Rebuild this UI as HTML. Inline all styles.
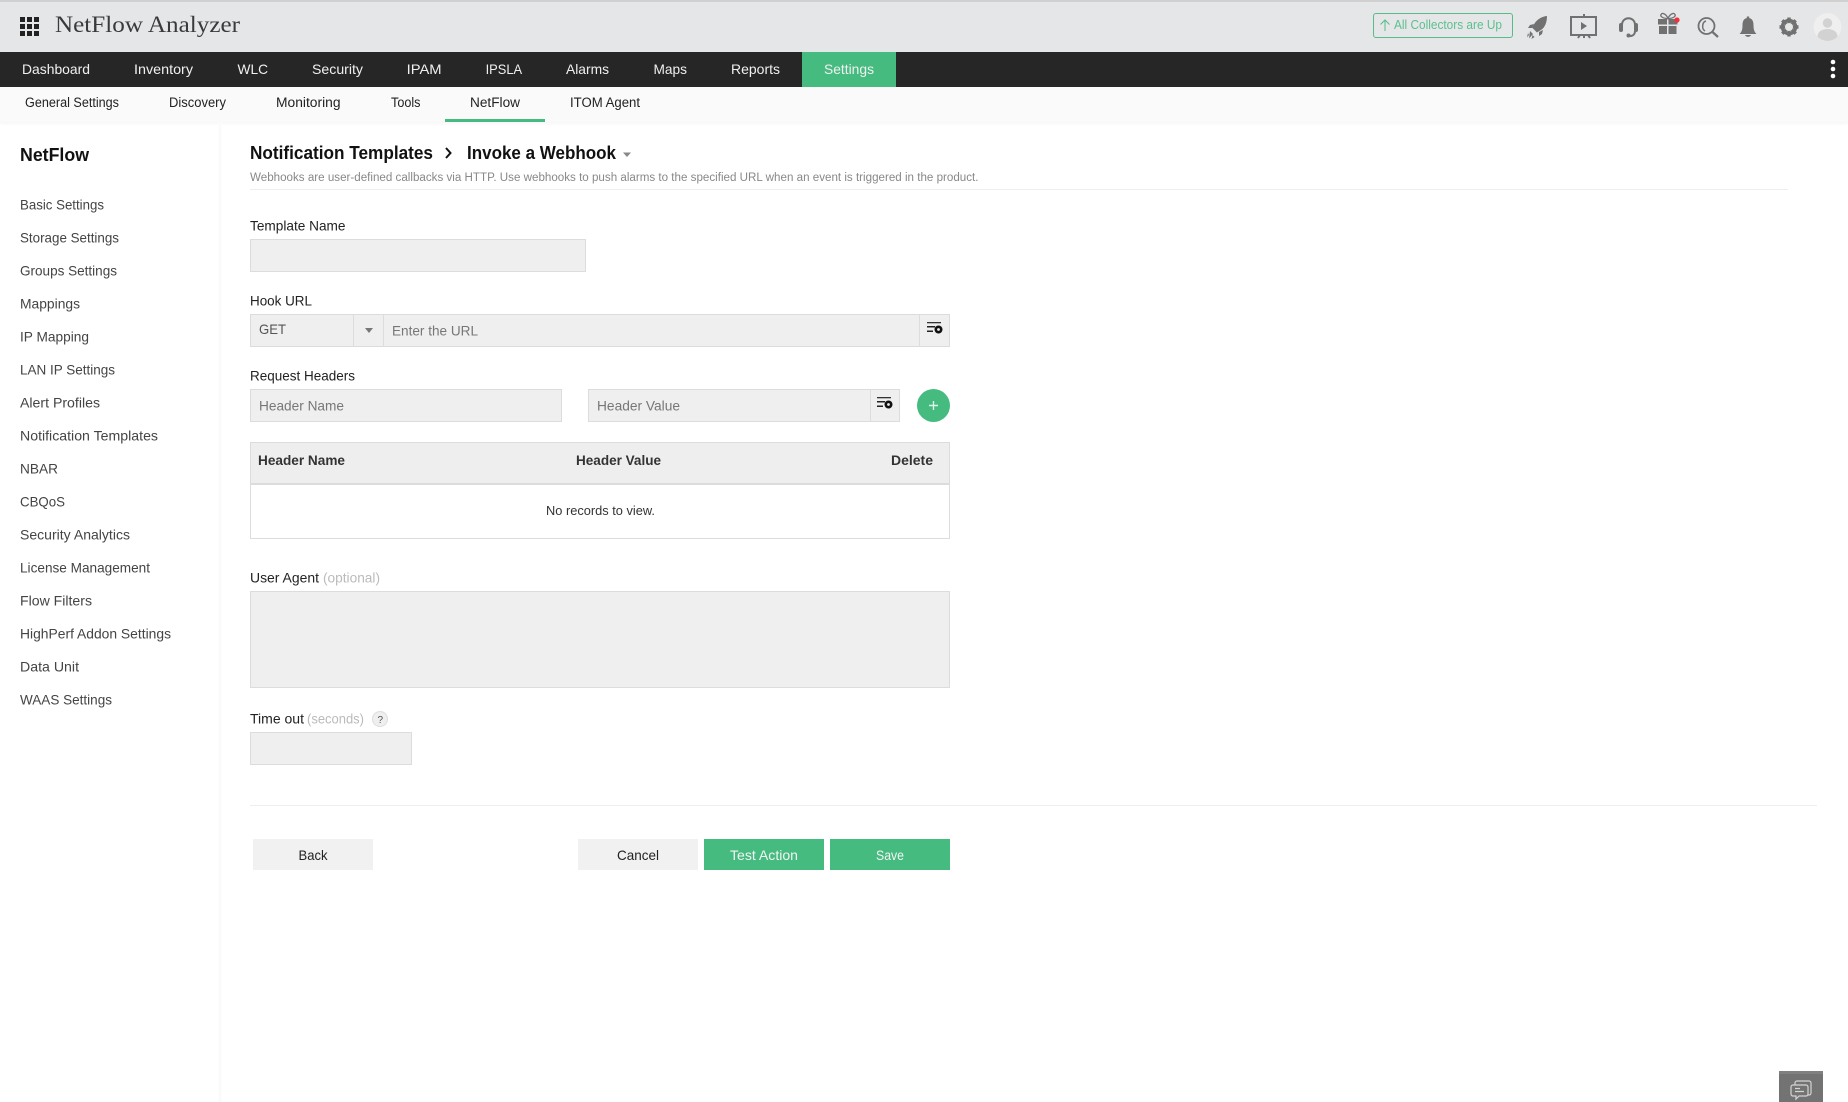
<!DOCTYPE html>
<html lang="en"><head><meta charset="utf-8"><title>NetFlow Analyzer</title>
<style>
html,body{margin:0;padding:0;width:1848px;height:1102px;overflow:hidden;background:#fff}
.b{position:absolute;box-sizing:border-box}
.in{background:#efefef;border:1px solid #dcdcdc}
svg{position:absolute;left:0;top:0}
text{font-family:"Liberation Sans",sans-serif;font-size:14px;fill:#333}
.nav{fill:#f0f0f0}.sub{fill:#222;font-size:13.5px}.side{fill:#444}.lab{fill:#222}.ph{fill:#777}.th{fill:#333;font-weight:bold;font-size:13.5px}.gr{fill:#bbb}.btn{fill:#222}.wbtn{fill:#f4f4f4}
</style></head><body>
<div class="b" style="left:0;top:0;width:1848px;height:52px;background:#e5e6e8;border-top:2px solid #d0d0d0"></div>
<div class="b" style="left:0;top:52px;width:1848px;height:35px;background:#262626"></div>
<div class="b" style="left:802px;top:52px;width:94px;height:35px;background:#45bb80"></div>
<div class="b" style="left:0;top:87px;width:1848px;height:35px;background:#fafafa;box-shadow:0 2px 3px rgba(0,0,0,.04)"></div>
<div class="b" style="left:445px;top:119px;width:100px;height:3px;background:#45bb80"></div>
<div class="b" style="left:218px;top:122px;width:4px;height:980px;background:linear-gradient(90deg,#fff,#f8f8f8 50%,#fff)"></div>
<div class="b" style="left:1373px;top:13px;width:140px;height:25px;border:1px solid #56bd88;border-radius:3px"></div>
<div class="b" style="left:250px;top:189px;width:1538px;height:1px;background:#eee"></div>
<div class="b in" style="left:250px;top:239px;width:336px;height:33px"></div>
<div class="b in" style="left:250px;top:314px;width:700px;height:33px"></div>
<div class="b" style="left:353px;top:315px;width:1px;height:31px;background:#dcdcdc"></div>
<div class="b" style="left:383px;top:315px;width:1px;height:31px;background:#dcdcdc"></div>
<div class="b" style="left:919px;top:315px;width:1px;height:31px;background:#dcdcdc"></div>
<div class="b in" style="left:250px;top:389px;width:312px;height:33px"></div>
<div class="b in" style="left:588px;top:389px;width:312px;height:33px"></div>
<div class="b" style="left:870px;top:390px;width:1px;height:31px;background:#dcdcdc"></div>
<div class="b" style="left:917px;top:389px;width:33px;height:33px;border-radius:50%;background:#45bb80"></div>
<div class="b" style="left:250px;top:442px;width:700px;height:97px;border:1px solid #dcdcdc"></div>
<div class="b" style="left:250px;top:442px;width:700px;height:43px;background:#eee;border:1px solid #dcdcdc;border-bottom-width:2px"></div>
<div class="b in" style="left:250px;top:591px;width:700px;height:97px"></div>
<div class="b in" style="left:250px;top:732px;width:162px;height:33px"></div>
<div class="b" style="left:250px;top:805px;width:1567px;height:1px;background:#eee"></div>
<div class="b" style="left:253px;top:839px;width:120px;height:31px;background:#f1f1f1"></div>
<div class="b" style="left:578px;top:839px;width:120px;height:31px;background:#f1f1f1"></div>
<div class="b" style="left:704px;top:839px;width:120px;height:31px;background:#45bb80"></div>
<div class="b" style="left:830px;top:839px;width:120px;height:31px;background:#45bb80"></div>
<div class="b" style="left:1779px;top:1071px;width:44px;height:31px;background:#737373;border-top:3px solid #808080"></div>

<svg width="1848" height="1102" viewBox="0 0 1848 1102">
<!-- grid icon -->
<g fill="#222">
<rect x="20" y="17" width="5" height="5"/><rect x="27" y="17" width="5" height="5"/><rect x="34" y="17" width="5" height="5"/>
<rect x="20" y="24" width="5" height="5"/><rect x="27" y="24" width="5" height="5"/><rect x="34" y="24" width="5" height="5"/>
<rect x="20" y="31" width="5" height="5"/><rect x="27" y="31" width="5" height="5"/><rect x="34" y="31" width="5" height="5"/>
</g>
<text x="55" y="32" textLength="185" lengthAdjust="spacingAndGlyphs" style="font-family:'Liberation Serif',serif;font-size:23px;fill:#3a3a3a">NetFlow Analyzer</text>

<!-- badge -->
<path d="M1385 31V20M1380.500 24.500l4.500-4.500 4.500 4.500" fill="none" stroke="#56bd88" stroke-width="1"/>
<text x="1394" y="29" textLength="108" lengthAdjust="spacingAndGlyphs" style="font-size:12.5px;fill:#5cc08e">All Collectors are Up</text>

<!-- rocket -->
<g fill="#717171">
<path d="M1547 16c-5.500.5-10 3.500-12.500 7.500l-2.500 4 5 5 4-2.500c4-2.500 6-8 6-14z"/>
<path d="M1534 24l-4 1-2 3 4 0zM1543 30l-1 4-3 2 0-4z"/>
<path d="M1530 31l3 3-4 4.500zM1532.500 35l2 2-3 2zM1528 33l1 2-2 2.500z"/>
</g>
<!-- presentation -->
<g fill="none" stroke="#717171" stroke-width="2">
<rect x="1571" y="17" width="25" height="18"/>
<path d="M1584 14v3M1584 35v3M1578 38l2-3M1590 38l-2-3"/>
</g>
<path d="M1581 22l6 4-6 4z" fill="#717171"/>
<!-- headset -->
<g fill="none" stroke="#717171" stroke-width="2">
<path d="M1622 25c0-9 13-9 13 0M1635 31c0 3-2 5-5 5"/>
</g>
<g fill="#717171"><rect x="1619" y="23" width="4" height="9" rx="2"/><rect x="1634" y="23" width="4" height="9" rx="2"/><circle cx="1628.500" cy="35.500" r="2"/></g>
<!-- gift -->
<g fill="#717171">
<rect x="1658" y="19" width="9" height="5.500"/><rect x="1668.500" y="19" width="9" height="5.500"/>
<rect x="1659" y="26" width="8" height="8"/><rect x="1668.500" y="26" width="8" height="8"/>
</g>
<path d="M1668 18.500c-2-5-6-6-7-4s2 4 7 4c5 0 8-2 7-4s-5-1-7 4z" fill="none" stroke="#717171" stroke-width="1.300"/>
<circle cx="1677" cy="20" r="2.600" fill="#f2303c"/>
<!-- search -->
<circle cx="1706.500" cy="26" r="8" fill="none" stroke="#717171" stroke-width="1.800"/>
<path d="M1712.500 32l5.500 5" stroke="#717171" stroke-width="2.200"/>
<path d="M1706 21c-4 1-4.500 8-1 10" fill="none" stroke="#717171" stroke-width="1.500"/>
<!-- bell -->
<path d="M1748 18c4 0 5.500 3 5.500 7 0 5 1 7 3 9h-17c2-2 3-4 3-9 0-4 1.500-7 5.500-7z" fill="#717171"/>
<rect x="1746.800" y="16.500" width="2.400" height="3" fill="#717171"/>
<path d="M1745 35h6c-1 2.500-5 2.500-6 0z" fill="#717171"/>
<!-- gear -->
<g stroke="#717171" stroke-width="3.400"><path d="M1789 17.500v19M1779.500 27h19M1782.300 20.300l13.400 13.400M1795.700 20.300l-13.400 13.400"/></g>
<circle cx="1789" cy="27" r="6.800" fill="none" stroke="#717171" stroke-width="3"/>
<circle cx="1789" cy="27" r="4" fill="#e5e6e8"/>
<!-- avatar -->
<clipPath id="av"><circle cx="1827.500" cy="27" r="14"/></clipPath>
<circle cx="1827.500" cy="27" r="14" fill="#efefef"/>
<g clip-path="url(#av)" fill="#d2d2d2">
<circle cx="1827.500" cy="23" r="4.700"/>
<ellipse cx="1827.500" cy="36" rx="10" ry="7"/>
</g>
<!-- kebab -->
<g fill="#fff"><circle cx="1833" cy="62" r="2.300"/><circle cx="1833" cy="69" r="2.300"/><circle cx="1833" cy="76" r="2.300"/></g>

<!-- nav -->
<g>
<text class="nav" x="22" y="74" textLength="68" lengthAdjust="spacingAndGlyphs">Dashboard</text>
<text class="nav" x="134" y="74" textLength="59" lengthAdjust="spacingAndGlyphs">Inventory</text>
<text class="nav" x="237.500" y="74" textLength="30.500" lengthAdjust="spacingAndGlyphs">WLC</text>
<text class="nav" x="312" y="74" textLength="51" lengthAdjust="spacingAndGlyphs">Security</text>
<text class="nav" x="406.600" y="74" textLength="35" lengthAdjust="spacingAndGlyphs">IPAM</text>
<text class="nav" x="485.600" y="74" textLength="36.500" lengthAdjust="spacingAndGlyphs">IPSLA</text>
<text class="nav" x="566" y="74" textLength="43" lengthAdjust="spacingAndGlyphs">Alarms</text>
<text class="nav" x="653.500" y="74" textLength="33.500" lengthAdjust="spacingAndGlyphs">Maps</text>
<text class="nav" x="731" y="74" textLength="49" lengthAdjust="spacingAndGlyphs">Reports</text>
<text class="nav" x="824" y="74" textLength="50" lengthAdjust="spacingAndGlyphs">Settings</text>
</g>
<!-- subnav -->
<text class="sub" x="25" y="107" textLength="94" lengthAdjust="spacingAndGlyphs">General Settings</text>
<text class="sub" x="169" y="107" textLength="57" lengthAdjust="spacingAndGlyphs">Discovery</text>
<text class="sub" x="276" y="107" textLength="64.500" lengthAdjust="spacingAndGlyphs">Monitoring</text>
<text class="sub" x="391" y="107" textLength="29.500" lengthAdjust="spacingAndGlyphs">Tools</text>
<text class="sub" x="470" y="107" textLength="50" lengthAdjust="spacingAndGlyphs">NetFlow</text>
<text class="sub" x="570" y="107" textLength="70" lengthAdjust="spacingAndGlyphs">ITOM Agent</text>

<!-- sidebar -->
<text x="20" y="161" textLength="69" lengthAdjust="spacingAndGlyphs" style="font-size:18px;font-weight:bold;fill:#111">NetFlow</text>
<text class="side" x="20" y="209.500" textLength="84" lengthAdjust="spacingAndGlyphs">Basic Settings</text>
<text class="side" x="20" y="242.500" textLength="99" lengthAdjust="spacingAndGlyphs">Storage Settings</text>
<text class="side" x="20" y="275.500" textLength="97" lengthAdjust="spacingAndGlyphs">Groups Settings</text>
<text class="side" x="20" y="308.500" textLength="60" lengthAdjust="spacingAndGlyphs">Mappings</text>
<text class="side" x="20" y="341.500" textLength="69" lengthAdjust="spacingAndGlyphs">IP Mapping</text>
<text class="side" x="20" y="374.500" textLength="95" lengthAdjust="spacingAndGlyphs">LAN IP Settings</text>
<text class="side" x="20" y="407.500" textLength="80" lengthAdjust="spacingAndGlyphs">Alert Profiles</text>
<text class="side" x="20" y="440.500" textLength="138" lengthAdjust="spacingAndGlyphs">Notification Templates</text>
<text class="side" x="20" y="473.500" textLength="38" lengthAdjust="spacingAndGlyphs">NBAR</text>
<text class="side" x="20" y="506.500" textLength="45" lengthAdjust="spacingAndGlyphs">CBQoS</text>
<text class="side" x="20" y="539.500" textLength="110" lengthAdjust="spacingAndGlyphs">Security Analytics</text>
<text class="side" x="20" y="572.500" textLength="130" lengthAdjust="spacingAndGlyphs">License Management</text>
<text class="side" x="20" y="605.500" textLength="72" lengthAdjust="spacingAndGlyphs">Flow Filters</text>
<text class="side" x="20" y="638.500" textLength="151" lengthAdjust="spacingAndGlyphs">HighPerf Addon Settings</text>
<text class="side" x="20" y="671.500" textLength="59" lengthAdjust="spacingAndGlyphs">Data Unit</text>
<text class="side" x="20" y="704.500" textLength="92" lengthAdjust="spacingAndGlyphs">WAAS Settings</text>

<!-- heading -->
<text x="250" y="159" textLength="183" lengthAdjust="spacingAndGlyphs" style="font-size:18px;font-weight:bold;fill:#111">Notification Templates</text>
<path d="M446 148l4.500 5-4.500 5" fill="none" stroke="#111" stroke-width="2"/>
<text x="467" y="159" textLength="149" lengthAdjust="spacingAndGlyphs" style="font-size:18px;font-weight:bold;fill:#111">Invoke a Webhook</text>
<path d="M623 152.500h8l-4 4.500z" fill="#888"/>
<text x="250" y="181" textLength="728.500" lengthAdjust="spacingAndGlyphs" style="font-size:11.500px;fill:#888">Webhooks are user-defined callbacks via HTTP. Use webhooks to push alarms to the specified URL when an event is triggered in the product.</text>

<!-- labels -->
<text class="lab" x="250" y="230.500" textLength="95.500" lengthAdjust="spacingAndGlyphs">Template Name</text>
<text class="lab" x="250" y="305.500" textLength="62" lengthAdjust="spacingAndGlyphs">Hook URL</text>
<text class="lab" x="250" y="380.500" textLength="105" lengthAdjust="spacingAndGlyphs">Request Headers</text>
<text x="259" y="334" textLength="27" lengthAdjust="spacingAndGlyphs" style="fill:#555">GET</text>
<path d="M365 328h8l-4 5z" fill="#777"/>
<text class="ph" x="392" y="335.500" textLength="86" lengthAdjust="spacingAndGlyphs">Enter the URL</text>
<text class="ph" x="259" y="410.500" textLength="85" lengthAdjust="spacingAndGlyphs">Header Name</text>
<text class="ph" x="597" y="410.500" textLength="83" lengthAdjust="spacingAndGlyphs">Header Value</text>

<!-- field icons -->
<g>
<rect x="927" y="322" width="14" height="1.300" fill="#333"/><rect x="927" y="326" width="8" height="1.500" fill="#222"/><rect x="927" y="330.500" width="6" height="1.500" fill="#222"/>
<circle cx="938.500" cy="329.500" r="4" fill="#111"/><circle cx="938.500" cy="329.500" r="1.400" fill="#efefef"/>
</g>
<g>
<rect x="877" y="397" width="14" height="1.300" fill="#333"/><rect x="877" y="401" width="8" height="1.500" fill="#222"/><rect x="877" y="405.500" width="6" height="1.500" fill="#222"/>
<circle cx="888.500" cy="404.500" r="4" fill="#111"/><circle cx="888.500" cy="404.500" r="1.400" fill="#efefef"/>
</g>
<path d="M933.500 401v9M929 405.500h9" stroke="#dff3e8" stroke-width="1.400"/>

<!-- table -->
<text class="th" x="258" y="465" textLength="87" lengthAdjust="spacingAndGlyphs">Header Name</text>
<text class="th" x="576" y="465" textLength="85" lengthAdjust="spacingAndGlyphs">Header Value</text>
<text class="th" x="891" y="465" textLength="42" lengthAdjust="spacingAndGlyphs">Delete</text>
<text x="546" y="515" textLength="109" lengthAdjust="spacingAndGlyphs" style="font-size:13px;fill:#333">No records to view.</text>

<text class="lab" x="250" y="582.500" textLength="69" lengthAdjust="spacingAndGlyphs">User Agent</text>
<text class="gr" x="323" y="582.500" textLength="57" lengthAdjust="spacingAndGlyphs">(optional)</text>
<text class="lab" x="250" y="723.500" textLength="54" lengthAdjust="spacingAndGlyphs">Time out</text>
<text class="gr" x="307" y="723.500" textLength="57" lengthAdjust="spacingAndGlyphs">(seconds)</text>
<circle cx="380" cy="719" r="7.500" fill="#efefef" stroke="#ddd"/>
<text x="377.500" y="723" style="font-size:10px;fill:#555">?</text>

<!-- buttons -->
<text class="btn" x="298.500" y="860" textLength="29" lengthAdjust="spacingAndGlyphs">Back</text>
<text class="btn" x="617" y="860" textLength="42" lengthAdjust="spacingAndGlyphs">Cancel</text>
<text class="wbtn" x="730" y="860" textLength="68" lengthAdjust="spacingAndGlyphs">Test Action</text>
<text class="wbtn" x="876" y="860" textLength="28" lengthAdjust="spacingAndGlyphs">Save</text>

<!-- chat -->
<g fill="none" stroke="#d4d4d4" stroke-width="1.200">
<path d="M1795 1085v-2a2 2 0 0 1 2-2h12a2 2 0 0 1 2 2v10a2 2 0 0 1-2 2h-1"/>
<path d="M1793 1085h13a2 2 0 0 1 2 2v7a2 2 0 0 1-2 2h-7l-3 3v-3h-3a2 2 0 0 1-2-2v-7a2 2 0 0 1 2-2z" fill="#737373"/>
<path d="M1795 1088.500h5M1795 1091.500h9"/>
</g>
</svg>
</body></html>
